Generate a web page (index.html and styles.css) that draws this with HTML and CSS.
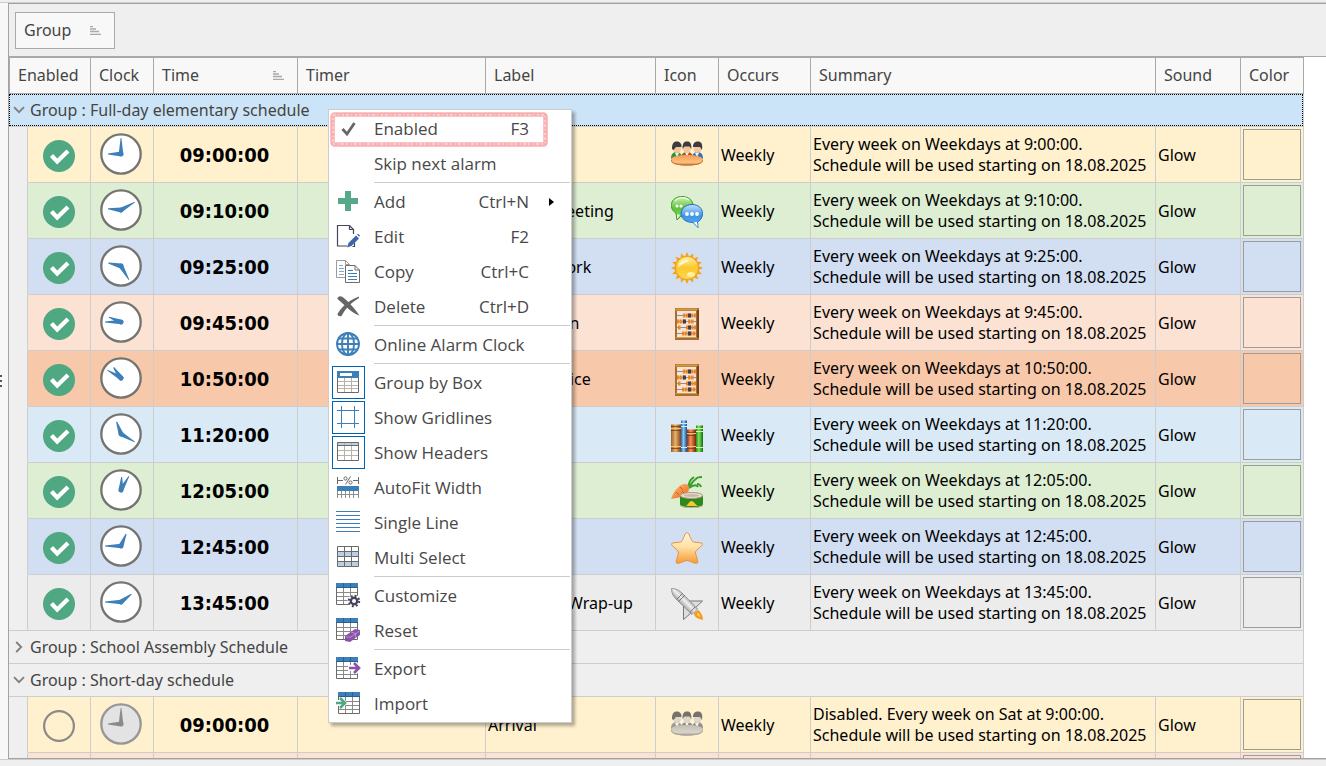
FILE: index.html
```html
<!DOCTYPE html>
<html lang="en">
<head>
<meta charset="utf-8">
<title>Alarm schedule</title>
<link rel="stylesheet" href="styles.css">
</head>
<body>
<svg class="defs" aria-hidden="true">
  <defs>
    <linearGradient id="g-sun" x1="0" y1="0" x2="0" y2="1"><stop offset="0" stop-color="#fff0a0"/><stop offset=".5" stop-color="#fdc829"/><stop offset="1" stop-color="#fbd860"/></linearGradient>
    <linearGradient id="g-star" x1="0" y1="0" x2="0" y2="1"><stop offset="0" stop-color="#fff3e0"/><stop offset=".45" stop-color="#ffe3a8"/><stop offset="1" stop-color="#f79a34"/></linearGradient>
    <linearGradient id="g-green" x1="0" y1="0" x2="0" y2="1"><stop offset="0" stop-color="#d0f2b4"/><stop offset=".5" stop-color="#5cc43a"/><stop offset="1" stop-color="#8edb64"/></linearGradient>
    <linearGradient id="g-blue" x1="0" y1="0" x2="0" y2="1"><stop offset="0" stop-color="#c5e2fb"/><stop offset=".5" stop-color="#3f94e6"/><stop offset="1" stop-color="#5eb4f4"/></linearGradient>
    <linearGradient id="g-table" x1="0" y1="0" x2="0" y2="1"><stop offset="0" stop-color="#f79a52"/><stop offset=".7" stop-color="#fbc082"/><stop offset="1" stop-color="#c07030"/></linearGradient>
    <linearGradient id="g-carrot" x1="0" y1="0" x2="1" y2="1"><stop offset="0" stop-color="#ffb878"/><stop offset="1" stop-color="#ea6a1c"/></linearGradient>
    <linearGradient id="g-metal" gradientUnits="userSpaceOnUse" x1="10" y1="20" x2="20" y2="10"><stop offset="0" stop-color="#808080"/><stop offset=".55" stop-color="#f0f0f0"/><stop offset="1" stop-color="#8c8c8c"/></linearGradient>
    <linearGradient id="g-b1" x1="0" y1="0" x2="1" y2="0"><stop offset="0" stop-color="#a0601c"/><stop offset=".45" stop-color="#e8b070"/><stop offset="1" stop-color="#80440c"/></linearGradient>
    <linearGradient id="g-b2" x1="0" y1="0" x2="1" y2="0"><stop offset="0" stop-color="#1868b8"/><stop offset=".4" stop-color="#8cc8f4"/><stop offset="1" stop-color="#145090"/></linearGradient>
    <linearGradient id="g-b3" x1="0" y1="0" x2="1" y2="0"><stop offset="0" stop-color="#983008"/><stop offset=".4" stop-color="#ee9460"/><stop offset="1" stop-color="#842000"/></linearGradient>
    <linearGradient id="g-b4" x1="0" y1="0" x2="1" y2="0"><stop offset="0" stop-color="#1c9018"/><stop offset=".4" stop-color="#84e060"/><stop offset="1" stop-color="#107008"/></linearGradient>

    <symbol id="sort" viewBox="0 0 11 9"><path d="M0 .5h3M0 3h6M0 5.500h9M0 8.500h11" stroke="#a9a9a6" stroke-width="1.500" fill="none"/></symbol>
    <symbol id="down" viewBox="0 0 12 8"><path d="M1 1.200l5 5 5-5" stroke="#7e7e7c" stroke-width="1.800" fill="none"/></symbol>
    <symbol id="right" viewBox="0 0 8 12"><path d="M1.200 1l5 5-5 5" stroke="#7e7e7c" stroke-width="1.800" fill="none"/></symbol>
    <symbol id="on" viewBox="0 0 32 32"><circle cx="16" cy="16" r="16" fill="#4fa882"/><path d="M8.500 15.500l5.700 6L25 11" stroke="#fff" stroke-width="4.200" fill="none"/></symbol>
    <symbol id="off" viewBox="0 0 32 32"><circle cx="16" cy="16" r="14.900" fill="none" stroke="#8a8a86" stroke-width="2.200"/></symbol>
    <symbol id="face" viewBox="0 0 42 42"><circle cx="21" cy="21" r="19.700" fill="#fff" stroke="#737370" stroke-width="2.300"/></symbol>
    <symbol id="face-off" viewBox="0 0 42 42"><circle cx="21" cy="21" r="19.700" fill="#e3e3e3" stroke="#969696" stroke-width="2.300"/></symbol>
    <symbol id="hour" viewBox="0 0 42 42"><path d="M20.500 8h1l2 13a2.500 2.500 0 0 1-5 0z"/></symbol>
    <symbol id="minute" viewBox="0 0 42 42"><path d="M20.600 5h.8l1.900 16a2.300 2.300 0 0 1-4.600 0z"/></symbol>

    <symbol id="people" viewBox="0 0 32 32">
      <path d="M0 19c0-5 2-7 5.500-7s5.500 2 5.500 7v3H0z" fill="#2f9636"/><path d="M21 19c0-5 2-7 5.500-7s5.500 2 5.500 7v3H21z" fill="#2c72bc"/>
      <path d="M10 20c0-6 2-8 6-8s6 2 6 8v2H10z" fill="#a8581c"/>
      <path d="M14 12l2 5 2-5zM4 13l2 4 2-4zM24 13l2 4 2-4z" fill="#f4f4f4"/>
      <ellipse cx="6" cy="8.500" rx="4" ry="4.500" fill="#f6c49a"/><ellipse cx="16" cy="8.500" rx="4" ry="4.500" fill="#f6c49a"/><ellipse cx="26.500" cy="8.500" rx="4" ry="4.500" fill="#f6c49a"/>
      <path d="M1 9c0-6 2-7.500 5-7.500S11 4 10.500 7L5 7 2.500 10zM11.500 9c0-6 1.500-7.500 4.500-7.500S20.500 3 20.500 9l-2-2.500-5 0zM22 7c0-4 2-5.500 5-5.500s5 2 4 8.500l-2-3z" fill="#3c3c40"/>
      <path d="M0 19c2-3 8-4 16-4s14 1 16 4v2c0 3-7 4.500-16 4.500S0 24 0 21z" fill="url(#g-table)"/><path d="M0 20c1 4 8 5 16 5s15-1 16-5" stroke="#c9712a" fill="none"/>
    </symbol>
    <symbol id="chat" viewBox="0 0 32 32">
      <path d="M5 17C1 15-1 10 1 6 3 2 7 .5 11 .5 17 .5 22 4 22 9.500S17 19 11 19l-5 5z" fill="url(#g-green)" stroke="#3b9a2a"/>
      <path d="M4 5c3-4 10-4 14-1" stroke="#fff" stroke-opacity=".7" stroke-width="1.500" fill="none"/>
      <path d="M21 8.500c6 0 10.500 3.500 10.500 9 0 4-2 7-5 8.500l.5 5.500-5-5c-7 0-12-4-12-9s5-9 11-9z" fill="url(#g-blue)" stroke="#1f6dc0"/>
      <path d="M26 26l.7 5-4-4.500z" fill="#fff"/><path d="M6 18v5l3-4z" fill="#eafbe0"/>
      <circle cx="6" cy="10" r="1.500" fill="#fff"/><circle cx="10" cy="10" r="1.500" fill="#fff"/>
      <circle cx="16" cy="18" r="1.900" fill="#fff"/><circle cx="21" cy="18" r="1.900" fill="#fff"/><circle cx="26" cy="18" r="1.900" fill="#fff"/>
    </symbol>
    <symbol id="sun" viewBox="0 0 32 32">
      <g fill="#f6a21c" id="ray4"><path id="ray" d="M16 0l2.800 6h-5.600z"/><use href="#ray" transform="rotate(22.5 16 16)"/><use href="#ray" transform="rotate(45 16 16)"/><use href="#ray" transform="rotate(67.5 16 16)"/></g>
      <use href="#ray4" transform="rotate(90 16 16)"/><use href="#ray4" transform="rotate(180 16 16)"/><use href="#ray4" transform="rotate(270 16 16)"/>
      <circle cx="16" cy="16" r="11.500" fill="url(#g-sun)" stroke="#f0a010"/><path d="M7 16c0-6 5-9 10-8.500 3 .5-1 3-4 4s-5 3-6 4.500z" fill="#fff6c4"/><ellipse cx="20" cy="22.500" rx="4" ry="2.500" fill="#fff2a0"/>
    </symbol>
    <symbol id="abacus" viewBox="0 0 32 32">
      <path d="M4 0h24v32H4z" fill="#a4702c"/><path d="M4.500.5h22v2h-22zM4.500 29h22v1h-22z" fill="#d89a44"/><path d="M26 2h2v28h-2z" fill="#74441c"/>
      <path d="M6 3h19v26H6z" fill="#fbe3d2"/><path d="M6 7.500h19M6 13.500h19M6 19.500h19M6 25.500h19" stroke="#8890a0"/>
      <g stroke="#e8862a" stroke-width="4" stroke-dasharray="2.200 .5"><path d="M12 7.500h13M6 13.500h8M17 13.500h6M7 19.500h3M15 19.500h10M11 25.500h14"/></g>
      <path d="M17 5.500h3v4h-3zM12 11.500h3v4h-3zM17 17.500h3v4h-3zM17 23.500h3v4h-3z" fill="#40404a"/>
    </symbol>
    <symbol id="books" viewBox="0 0 32 32">
      <path d="M0 4h10v28H0z" fill="url(#g-b1)"/><path d="M10 0h6v32h-6z" fill="url(#g-b2)"/><path d="M16 9h9v23h-9z" fill="url(#g-b3)"/><path d="M25 5h7v27h-7z" fill="url(#g-b4)"/>
      <path d="M0 6.500h10M0 10.500h10M0 28.500h10M16 12.500h9M16 15.500h9M16 28.500h9" stroke="#6c340c" stroke-opacity=".7"/><path d="M0 8.500h10M16 13.500h9M16 26.500h9M0 26.500h10" stroke="#f2c070"/>
      <path d="M10 3.500h6M10 6.500h6M10 27.500h6" stroke="#d4ecff"/><path d="M25 8.500h7M25 11.500h7M25 27.500h7" stroke="#c8f8a8"/>
      <path d="M10 .500h6M25 5.500h7M16 9.500h9M0 4.500h10" stroke="#fff" stroke-opacity=".4"/>
    </symbol>
    <symbol id="food" viewBox="0 0 32 32">
      <path d="M17 12c1-6 2-8 6-11M18 11c3-5 5-7 8-9M18 12c5-4 8-3 9-1M25 3c1-2 4-2 6-2M26 8c2 0 3 0 4 3" stroke="#37a02a" stroke-width="2" fill="none"/>
      <path d="M0 23C3 14 9 8 14 8c4 0 5 4 3 8C14 20 8 22 0 23z" fill="url(#g-carrot)"/><path d="M9 11l3 3M5 16l3 3M13 17l-2-2" stroke="#cf5a14"/>
      <path d="M9 19v9.500c0 4.500 23 4.500 23 0V19z" fill="#2b8a1c"/><path d="M9 28.500c2 3.500 21 3.500 23 0v1c-2 3.500-21 3.500-23 0z" fill="#c8b8a0"/>
      <ellipse cx="20.500" cy="19.500" rx="11.300" ry="3" fill="#f0dcc8" stroke="#a89888"/><ellipse cx="20.500" cy="19.500" rx="8" ry="1.500" fill="#cdb8a8"/>
      <path d="M15 30c2-1 3-5 5.500-5s4 4 6.500 5z" fill="#f8c830"/>
    </symbol>
    <symbol id="star" viewBox="0 0 32 32"><path d="M16 .5c2 0 4 7.500 5.500 9s10 .5 10 2.500-6.500 6-7 8 3.500 9.500 2 11-8.500-2.500-10.500-2.500-9 4-10.500 2.500 2.500-9 2-11-7-6-7-8 8.500-1 10-2.500 3.500-9 5.500-9z" fill="url(#g-star)" stroke="#e8913a"/></symbol>
    <symbol id="rocket" viewBox="0 0 32 32">
      <path d="M32 32c-5-1-9-3-9-7l4-3c3 2 5 6 5 10z" fill="#f79a20"/><path d="M29 29c-2-1-3-2-3-4 2 0 3 2 3 4z" fill="#ffe070"/>
      <path d="M17 13h14.500L24 20zM12.500 17v14.500L20 25z" fill="#dedede" stroke="#777"/>
      <path d="M.5.5C6 .5 9 3 12 6l14.500 15-5.500 5.500L6 12C3 9 .5 6 .5.5z" fill="url(#g-metal)" stroke="#858585" stroke-width=".8"/>
      <path d="M5.500 11.500l6-6M7.500 13.500l6-6M19 24.500l5-5.500" stroke="#707070"/>
    </symbol>

    <symbol id="table-base" viewBox="0 0 31 31"><path d="M3.500 4h21v20.500h-21z" fill="#fff" stroke="#6a6a68"/><path d="M3 3h22v5H3z" fill="#3d7fb8"/><path d="M10.500 3v5M17.500 3v5M3 7.500h22" stroke="#2a6090"/><path d="M10.500 8v16M17.500 8v16M4 12.500h20M4 16.500h20M4 20.500h20" stroke="#8a8a86"/></symbol>
  </defs>
</svg>

<main class="workspace">
  <div class="splitter" role="separator" aria-orientation="vertical"><i></i><i></i><i></i></div>
  <section class="panel">
    <div class="group-box"><button class="chip" type="button">Group<svg class="sort"><use href="#sort"/></svg></button></div>
    <div class="grid-area">
      <table class="grid">
        <colgroup><col class="c-indent"><col class="c-small"><col class="c-small"><col class="c-time"><col class="c-timer"><col class="c-label"><col class="c-small"><col class="c-occurs"><col class="c-summary"><col class="c-sound"><col class="c-small"></colgroup>
        <thead><tr><th colspan="2">Enabled</th><th>Clock</th><th><span class="sorted">Time<svg class="sort"><use href="#sort"/></svg></span></th><th>Timer</th><th>Label</th><th>Icon</th><th>Occurs</th><th>Summary</th><th>Sound</th><th>Color</th></tr></thead>
        <tbody>
          <tr class="group selected"><td colspan="11"><div class="group-title"><span class="arrow"><svg class="down"><use href="#down"/></svg></span>Group : Full-day elementary schedule</div></td></tr>
          <tr class="row cream"><td></td><td><svg class="state"><use href="#on"/></svg></td><td class="dial"><svg class="clock" viewBox="0 0 42 42"><use href="#face"/><use href="#hour" transform="rotate(270 21 21)"/><use href="#minute"/></svg></td><td class="time">09:00:00</td><td></td><td>Arrival</td><td><svg class="pic"><use href="#people"/></svg></td><td>Weekly</td><td class="summary">Every week on Weekdays at 9:00:00.<br>Schedule will be used starting on 18.08.2025</td><td>Glow</td><td><div class="swatch"></div></td></tr>
          <tr class="row green"><td></td><td><svg class="state"><use href="#on"/></svg></td><td class="dial"><svg class="clock" viewBox="0 0 42 42"><use href="#face"/><use href="#hour" transform="rotate(275 21 21)"/><use href="#minute" transform="rotate(60 21 21)"/></svg></td><td class="time">09:10:00</td><td></td><td>Student meeting</td><td><svg class="pic"><use href="#chat"/></svg></td><td>Weekly</td><td class="summary">Every week on Weekdays at 9:10:00.<br>Schedule will be used starting on 18.08.2025</td><td>Glow</td><td><div class="swatch"></div></td></tr>
          <tr class="row blue"><td></td><td><svg class="state"><use href="#on"/></svg></td><td class="dial"><svg class="clock" viewBox="0 0 42 42"><use href="#face"/><use href="#hour" transform="rotate(283 21 21)"/><use href="#minute" transform="rotate(150 21 21)"/></svg></td><td class="time">09:25:00</td><td></td><td>Reading work</td><td><svg class="pic"><use href="#sun"/></svg></td><td>Weekly</td><td class="summary">Every week on Weekdays at 9:25:00.<br>Schedule will be used starting on 18.08.2025</td><td>Glow</td><td><div class="swatch"></div></td></tr>
          <tr class="row peach"><td></td><td><svg class="state"><use href="#on"/></svg></td><td class="dial"><svg class="clock" viewBox="0 0 42 42"><use href="#face"/><use href="#hour" transform="rotate(292 21 21)"/><use href="#minute" transform="rotate(270 21 21)"/></svg></td><td class="time">09:45:00</td><td></td><td>Math lesson</td><td><svg class="pic"><use href="#abacus"/></svg></td><td>Weekly</td><td class="summary">Every week on Weekdays at 9:45:00.<br>Schedule will be used starting on 18.08.2025</td><td>Glow</td><td><div class="swatch"></div></td></tr>
          <tr class="row orange"><td></td><td><svg class="state"><use href="#on"/></svg></td><td class="dial"><svg class="clock" viewBox="0 0 42 42"><use href="#face"/><use href="#hour" transform="rotate(325 21 21)"/><use href="#minute" transform="rotate(300 21 21)"/></svg></td><td class="time">10:50:00</td><td></td><td>Math practice</td><td><svg class="pic"><use href="#abacus"/></svg></td><td>Weekly</td><td class="summary">Every week on Weekdays at 10:50:00.<br>Schedule will be used starting on 18.08.2025</td><td>Glow</td><td><div class="swatch"></div></td></tr>
          <tr class="row sky"><td></td><td><svg class="state"><use href="#on"/></svg></td><td class="dial"><svg class="clock" viewBox="0 0 42 42"><use href="#face"/><use href="#hour" transform="rotate(340 21 21)"/><use href="#minute" transform="rotate(120 21 21)"/></svg></td><td class="time">11:20:00</td><td></td><td>Reading</td><td><svg class="pic"><use href="#books"/></svg></td><td>Weekly</td><td class="summary">Every week on Weekdays at 11:20:00.<br>Schedule will be used starting on 18.08.2025</td><td>Glow</td><td><div class="swatch"></div></td></tr>
          <tr class="row green"><td></td><td><svg class="state"><use href="#on"/></svg></td><td class="dial"><svg class="clock" viewBox="0 0 42 42"><use href="#face"/><use href="#hour" transform="rotate(3 21 21)"/><use href="#minute" transform="rotate(30 21 21)"/></svg></td><td class="time">12:05:00</td><td></td><td>Lunch</td><td><svg class="pic"><use href="#food"/></svg></td><td>Weekly</td><td class="summary">Every week on Weekdays at 12:05:00.<br>Schedule will be used starting on 18.08.2025</td><td>Glow</td><td><div class="swatch"></div></td></tr>
          <tr class="row blue"><td></td><td><svg class="state"><use href="#on"/></svg></td><td class="dial"><svg class="clock" viewBox="0 0 42 42"><use href="#face"/><use href="#hour" transform="rotate(23 21 21)"/><use href="#minute" transform="rotate(270 21 21)"/></svg></td><td class="time">12:45:00</td><td></td><td>Specials</td><td><svg class="pic"><use href="#star"/></svg></td><td>Weekly</td><td class="summary">Every week on Weekdays at 12:45:00.<br>Schedule will be used starting on 18.08.2025</td><td>Glow</td><td><div class="swatch"></div></td></tr>
          <tr class="row gray last"><td></td><td><svg class="state"><use href="#on"/></svg></td><td class="dial"><svg class="clock" viewBox="0 0 42 42"><use href="#face"/><use href="#hour" transform="rotate(53 21 21)"/><use href="#minute" transform="rotate(270 21 21)"/></svg></td><td class="time">13:45:00</td><td></td><td>Classwork Wrap-up</td><td><svg class="pic"><use href="#rocket"/></svg></td><td>Weekly</td><td class="summary">Every week on Weekdays at 13:45:00.<br>Schedule will be used starting on 18.08.2025</td><td>Glow</td><td><div class="swatch"></div></td></tr>
          <tr class="group"><td colspan="11"><div class="group-title"><span class="arrow"><svg class="right"><use href="#right"/></svg></span>Group : School Assembly Schedule</div></td></tr>
          <tr class="group"><td colspan="11"><div class="group-title"><span class="arrow"><svg class="down"><use href="#down"/></svg></span>Group : Short-day schedule</div></td></tr>
          <tr class="row cream disabled"><td></td><td><svg class="state"><use href="#off"/></svg></td><td class="dial"><svg class="clock" viewBox="0 0 42 42"><use href="#face-off"/><use href="#hour" transform="rotate(270 21 21)"/><use href="#minute"/></svg></td><td class="time">09:00:00</td><td></td><td>Arrival</td><td><svg class="pic"><use href="#people"/></svg></td><td>Weekly</td><td class="summary">Disabled. Every week on Sat at 9:00:00.<br>Schedule will be used starting on 18.08.2025</td><td>Glow</td><td><div class="swatch"></div></td></tr>
          <tr class="row peach disabled"><td></td><td></td><td></td><td></td><td></td><td></td><td></td><td></td><td></td><td></td><td><div class="swatch"></div></td></tr>
        </tbody>
      </table>
    </div>

    <div class="menu" role="menu">
      <button class="item" role="menuitem" type="button"><span class="slot"><svg viewBox="0 0 31 31"><path d="M9.500 16l4.500 5L21.500 10" stroke="#666" stroke-width="2.800" fill="none"/></svg></span><span>Enabled</span><span>F3</span></button>
      <button class="item" role="menuitem" type="button"><span class="slot"></span><span>Skip next alarm</span></button>
      <hr>
      <button class="item" role="menuitem" type="button"><span class="slot"><svg viewBox="0 0 31 31"><path d="M12 5h6v7h7v6h-7v7h-6v-7H5v-6h7z" fill="#55a98a"/></svg></span><span>Add</span><span>Ctrl+N</span><svg class="sub" viewBox="0 0 5 8"><path d="M0 0l5 4-5 4z"/></svg></button>
      <button class="item" role="menuitem" type="button"><span class="slot"><svg viewBox="0 0 31 31"><path d="M20.500 13V8.500l-4-4h-12v20.500h9.500M16.500 4.500v4h4M21.500 22v3.500h-2" stroke="#45455c" stroke-width="1.200" fill="none"/><path d="M14 26.500l1.500-4.500 7.500-7.500 3 3-7.500 7.500z" fill="#3d64ae"/><path d="M24 13.500l1-.8 2 1.800-.8 1.200z" fill="#3d64ae"/></svg></span><span>Edit</span><span>F2</span></button>
      <button class="item" role="menuitem" type="button"><span class="slot"><svg viewBox="0 0 31 31"><path d="M12 21.500H3.500v-17h9l4 4" stroke="#9b9b9b" fill="none"/><path d="M12.500 4.500v4h4" stroke="#9b9b9b" fill="none"/><path d="M6 9.500h4M6 12.500h5M6 15.500h5M6 18.500h5" stroke="#7fabd0"/><path d="M12.500 9.500h9.500l4.500 4.500v12.500h-14z" fill="#fff" stroke="#6d6d6b"/><path d="M22 9.500V14h4.500" stroke="#6d6d6b" fill="none"/><path d="M15 14.500h5M15 17.500h9M15 20.500h9M15 23.500h9" stroke="#3d7fb5"/></svg></span><span>Copy</span><span>Ctrl+C</span></button>
      <button class="item" role="menuitem" type="button"><span class="slot"><svg viewBox="0 0 31 31"><path d="M4.500 8c0-2.500 2.500-3.500 5-2 4 2.500 12 11 17 18.500-9-3-15-11-22-16.500z" fill="#666"/><path d="M26 5.500C18 8 9 15 4.500 23c0 2 2 2.500 4 2C12 18 19 11 26 7z" fill="#666"/></svg></span><span>Delete</span><span>Ctrl+D</span></button>
      <hr>
      <button class="item" role="menuitem" type="button"><span class="slot"><svg viewBox="0 0 31 31"><g fill="none" stroke="#3d7fb8" stroke-width="1.900"><circle cx="15" cy="15" r="11"/><ellipse cx="15" cy="15" rx="6" ry="11"/><path d="M15 4v22M4 15h22M6 9.500h18M6 20.500h18"/></g></svg></span><span>Online Alarm Clock</span></button>
      <hr>
      <button class="item checked" role="menuitemcheckbox" aria-checked="true" type="button"><span class="slot"><svg viewBox="0 0 31 31"><path d="M4.500 10.500v15h21v-15" stroke="#6a6a68" fill="#fff"/><path d="M4 4h22v7H4z" fill="#3d7fb8"/><path d="M7 6h12v3H7z" fill="#fff"/><path d="M11.500 11v14M18.500 11v14M5 14.500h20M5 18.500h20M5 21.500h20" stroke="#b5b2a8"/></svg></span><span>Group by Box</span></button>
      <button class="item checked" role="menuitemcheckbox" aria-checked="true" type="button"><span class="slot"><svg viewBox="0 0 31 31"><path d="M8.500 4v22M21.500 4v22M4 8.500h22M4 21.500h22" stroke="#3d7fb8"/></svg></span><span>Show Gridlines</span></button>
      <button class="item checked" role="menuitemcheckbox" aria-checked="true" type="button"><span class="slot"><svg viewBox="0 0 31 31"><path d="M4.500 5.500h21v18h-21z" fill="#fff"/><path d="M4 5h22v4H4z" fill="#bccfe4"/><path d="M11.500 5v19M18.500 5v19M5 13.500h20M5 18.500h20" stroke="#b5b2a8"/><path d="M4.500 5.500h21v18h-21zM4 8.500h22" fill="none" stroke="#6a6a68"/></svg></span><span>Show Headers</span></button>
      <button class="item" role="menuitem" type="button"><span class="slot"><svg viewBox="0 0 31 31"><path d="M4.500 5v7M25.500 5v7M4 8.500h6M20 8.500h6" stroke="#6a6a68"/><g fill="none" stroke="#6a6a68"><circle cx="12.500" cy="6.500" r="1.600"/><circle cx="17.500" cy="10.500" r="1.600"/><path d="M17.500 4.500l-5 8"/></g><path d="M4 14h22v5H4z" fill="#3d7fb8"/><path d="M4.500 19v7M8.500 19v7M12.500 19v7M16.500 19v7M20.500 19v7M25.500 19v7M4 22.500h22" stroke="#8f8f8c"/></svg></span><span>AutoFit Width</span></button>
      <button class="item" role="menuitem" type="button"><span class="slot"><svg viewBox="0 0 31 31"><path d="M3 4.500h24M3 8.500h24M3 12.500h24M3 16.500h24M3 20.500h24M3 24.500h24" stroke="#3d7fb8"/></svg></span><span>Single Line</span></button>
      <button class="item" role="menuitem" type="button"><span class="slot"><svg viewBox="0 0 31 31"><path d="M4 9h22v5H4zM4 19h22v5H4z" fill="#bccfe4"/><path d="M4.500 4.500h21v20h-21zM11.500 4v21M18.500 4v21M4 9.500h22M4 14.500h22M4 19.500h22" stroke="#6a6a68" fill="none"/></svg></span><span>Multi Select</span></button>
      <hr>
      <button class="item" role="menuitem" type="button"><span class="slot"><svg viewBox="0 0 31 31"><use href="#table-base"/><circle cx="21" cy="21" r="6.500" fill="#fff"/><circle cx="21" cy="21" r="3.200" fill="none" stroke="#45455c" stroke-width="2.400"/><circle cx="21" cy="21" r="5.200" fill="none" stroke="#45455c" stroke-width="2" stroke-dasharray="2 2.080"/></svg></span><span>Customize</span></button>
      <button class="item" role="menuitem" type="button"><span class="slot"><svg viewBox="0 0 31 31"><use href="#table-base"/><path d="M12 21l10-7 5 1v5l-10 7-5-1z" fill="#8a52a8"/><path d="M12.500 21.500l4.500 1L26.500 16M18 17l4.500 1.500v4" stroke="#c9a8da" stroke-width=".7" fill="none"/></svg></span><span>Reset</span></button>
      <hr>
      <button class="item" role="menuitem" type="button"><span class="slot"><svg viewBox="0 0 31 31"><use href="#table-base" y="1"/><path d="M15 12h6V9h3l4 6-4 6h-3v-3h-6z" fill="#fff"/><path d="M16 15h9M21 10l5 5-5 5" stroke="#8a52a8" stroke-width="2.600" fill="none"/></svg></span><span>Export</span></button>
      <button class="item" role="menuitem" type="button"><span class="slot"><svg viewBox="0 0 31 31"><use href="#table-base" x="2" y="1"/><path d="M2 12h5V9h3l4 6-4 6H7v-3H2z" fill="#fff"/><path d="M3 15h8M7 10l5 5-5 5" stroke="#4fa882" stroke-width="2.600" fill="none"/></svg></span><span>Import</span></button>
      <svg class="marker" viewBox="0 0 218 35" aria-hidden="true"><rect x="2.500" y="2.500" width="213" height="30" rx="2" fill="none" stroke="#f9b0b2" stroke-width="4.500"/><path d="M3 3h212v29H3z" fill="none" stroke="#fcd3d4" stroke-width="1.500" stroke-dasharray="3 2 1 3 2 2"/></svg>
    </div>
  </section>
</main>
</body>
</html>
```
FILE: styles.css
```css
* { box-sizing: border-box; }
body {
  margin: 0;
  height: 100vh;
  display: flex;
  flex-direction: column;
  padding: 2px 0 6px;
  background: #efefef;
  overflow: hidden;
  font: 16px/21px "Noto Sans", sans-serif;
  color: #000;
}
button { font: inherit; color: inherit; text-align: left; }
.defs { position: absolute; width: 0; height: 0; }

.workspace {
  flex: 1;
  min-height: 0;
  display: flex;
  border-top: 1px solid #cccccc;
  border-bottom: 1px solid #cccccc;
}
.splitter {
  width: 8px;
  background: #f7f7f7;
  display: flex;
  flex-direction: column;
  justify-content: center;
  gap: 3px;
}
.splitter i { width: 2px; height: 2px; background: #555; }

.panel {
  position: relative;
  flex: 1;
  min-width: 0;
  display: flex;
  flex-direction: column;
  border: 1px solid #a3a3a3;
  border-right: 0;
  overflow: hidden;
}
.group-box { padding: 8px 6px 7px; border-bottom: 1px solid #a9a9a9; color: #444; }
.chip {
  width: 100px;
  height: 37px;
  padding: 0 13px 0 8px;
  display: flex;
  align-items: center;
  justify-content: space-between;
  border: 1px solid #a9a9a9;
  background: #f8f8f8;
}
.sort { width: 11px; height: 9px; }

.grid-area { flex: 1; min-height: 0; overflow: hidden; background: #fff; }
.grid { width: 1295px; table-layout: fixed; border-collapse: separate; border-spacing: 0; }
.c-indent { width: 19px; }
.c-small { width: 63px; }
.c-time { width: 144px; }
.c-timer { width: 188px; }
.c-label { width: 170px; }
.c-occurs { width: 92px; }
.c-summary { width: 345px; }
.c-sound { width: 85px; }

.grid th {
  height: 37px;
  padding: 0 8px;
  text-align: left;
  font-weight: 400;
  color: #444;
  background: #f8f8f8;
  border: 1px solid #a9a9a9;
  border-left: 0;
}
.grid th:first-child { border-left: 1px solid #a9a9a9; }
.sorted { display: flex; align-items: center; justify-content: space-between; padding-right: 5px; }

.group td {
  padding: 0;
  background: #efefef;
  border-right: 1px solid #cdcdcd;
  border-bottom: 1px solid #cdcdcd;
}
.group-title { height: 32px; display: flex; align-items: center; color: #444; }
.selected .group-title { background: #cce4f7; outline: 1px dotted #000; outline-offset: -1px; }
.arrow { width: 21px; display: flex; padding-left: 4px; }
.down { width: 12px; height: 8px; }
.right { width: 8px; height: 12px; margin-left: 2px; }

.row td {
  height: 56px;
  padding: 2px 2px 0;
  white-space: nowrap;
  border-right: 1px solid #cdcdcd;
  border-bottom: 1px solid #cdcdcd;
}
.row td:first-child { background: #efefef; border-bottom-color: #efefef; }
.row.last td:first-child { border-bottom-color: #cdcdcd; }
.row .summary, .row td:last-child { padding-top: 0; }
.row svg { display: block; margin: 0 auto; }
.row .time { padding: 0 4px 0 2px; font: 700 20px/24px "DejaVu Sans Condensed", "DejaVu Sans", sans-serif; text-align: center; }
.row .dial { padding: 0 4px 2px 2px; }
.state, .pic { width: 32px; height: 32px; }
.clock { width: 42px; height: 42px; fill: #3d7fb8; }
.disabled .clock { fill: #8a8a86; }
.disabled .pic { filter: grayscale(1) opacity(.7); }
.swatch { height: 51px; border: 1px solid #9c9c9c; }

.cream { background: #fff0ce; }
.green { background: #ddeed3; }
.blue { background: #d2def2; }
.peach { background: #fbe2d3; }
.orange { background: #f7c8a9; }
.sky { background: #d9e9f6; }
.gray { background: #ececec; }

.menu {
  position: absolute;
  left: 319px;
  top: 105px;
  width: 244px;
  padding: 2px 0 0 3px;
  background: #fff;
  border: 1px solid #cccccc;
  box-shadow: 3px 3px 3px rgba(0, 0, 0, .3);
  font: 17px/24px "Open Sans", sans-serif;
  color: #484848;
  white-space: nowrap;
}
.item {
  width: 100%;
  height: 35px;
  padding: 0 0 2px;
  display: grid;
  grid-template-columns: 33px 1fr auto 33px;
  column-gap: 9px;
  align-items: center;
  background: none;
  border: 0;
}
.slot { align-self: start; width: 33px; height: 33px; border: 1px solid transparent; }
.slot svg { display: block; width: 31px; height: 31px; }
.checked .slot { border-color: #0063b1; }
.sub { width: 5px; height: 8px; margin-left: 11px; fill: #000; }
.menu hr { height: 3px; margin: 0 1px 0 42px; border: 0; border-top: 1px solid #cccccc; }
.marker { position: absolute; left: 1px; top: 2px; width: 218px; height: 35px; pointer-events: none; }
```
